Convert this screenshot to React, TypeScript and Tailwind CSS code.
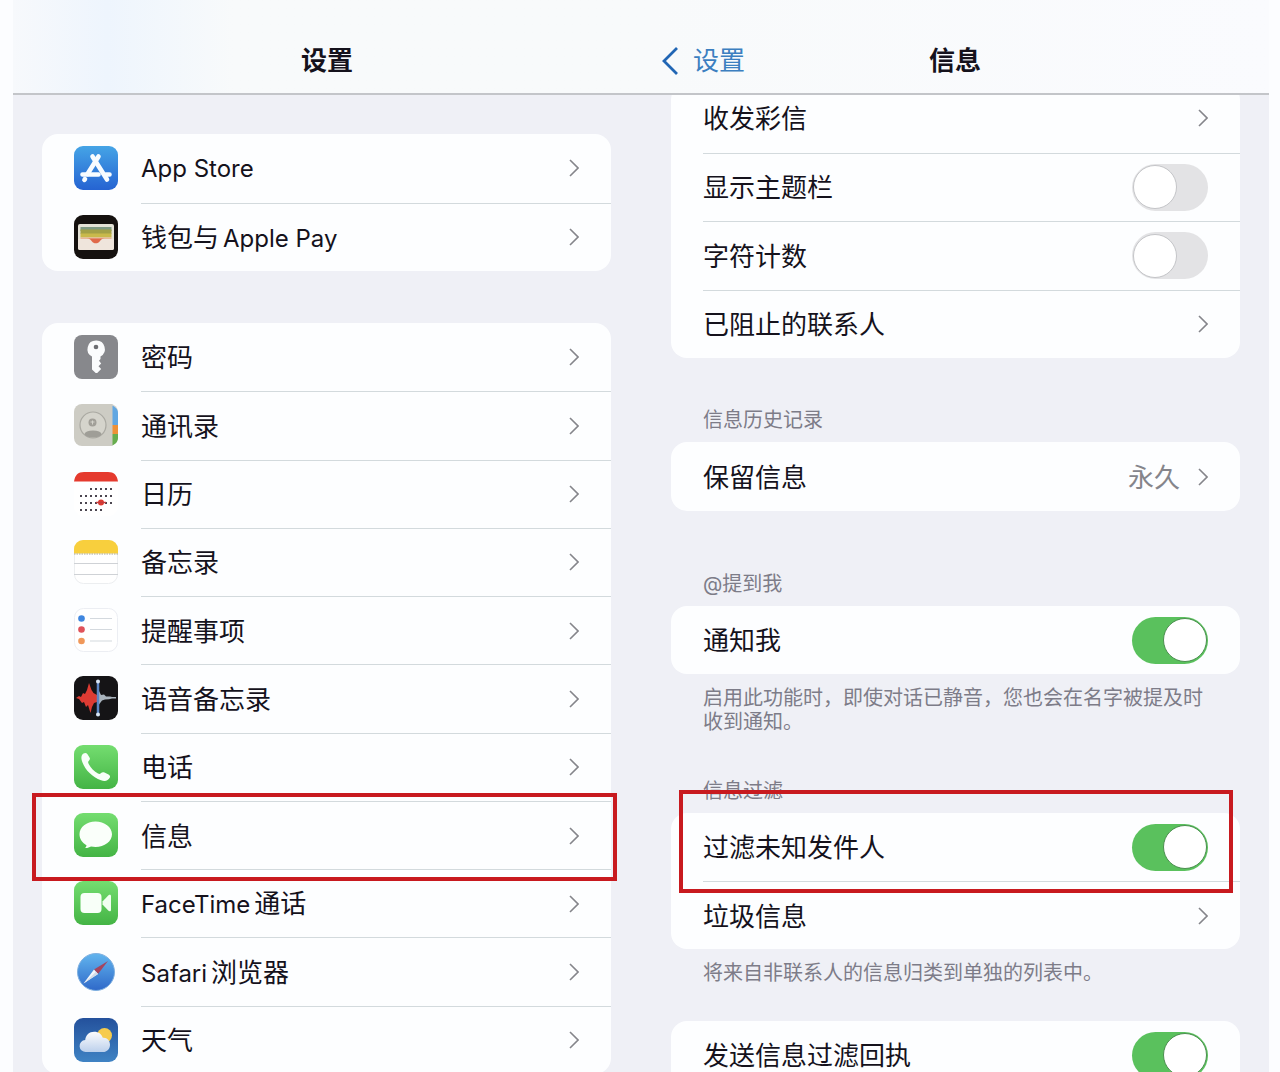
import type { ReactNode } from "react";

const Tile = ({ children, label }: { children: ReactNode; label: string }) => (
  <svg viewBox="0 0 44 44" className="size-11 shrink-0" role="img" aria-label={label}>
    {children}
  </svg>
);

const AppStoreIcon = () => (
  <Tile label="App Store">
    <defs>
      <linearGradient id="store" x1="0" y1="0" x2="0" y2="1">
        <stop offset="0" stopColor="#45a4e6" />
        <stop offset="1" stopColor="#2563d2" />
      </linearGradient>
    </defs>
    <rect width="44" height="44" rx="9" fill="url(#store)" />
    <g stroke="#f8fcff" strokeWidth="4.600" strokeLinecap="round" fill="none">
      <path d="M24.500 10.500L13.500 28" />
      <path d="M18.500 10.500L33 33.500" />
      <path d="M8.500 28.500h16M32 28.500h3.500" />
      <path d="M11 33l-.6 .8" />
    </g>
  </Tile>
);

const WalletIcon = () => (
  <Tile label="钱包">
    <rect width="44" height="44" rx="9" fill="#15110f" />
    <rect x="4" y="9" width="36" height="26" rx="2" fill="#e4e2d6" />
    <rect x="6.500" y="12" width="31" height="4" fill="#7f9a83" />
    <rect x="6.500" y="14.500" width="31" height="4.500" fill="#a2a047" />
    <rect x="6.500" y="18.500" width="31" height="4" fill="#c9b94b" />
    <path d="M6.500 22.500h31v2h-31z" fill="#e8b796" />
    <path d="M4 24h36v9a2 2 0 0 1-2 2H6a2 2 0 0 1-2-2z" fill="#efe5dc" />
    <path d="M13 23.500c3 0 4 1.500 5 3 .8 1.200 2 1.800 3.800 1.800s3-.6 3.800-1.800c1-1.500 2-3 5-3z" fill="#e0694a" />
  </Tile>
);

const KeyIcon = () => (
  <Tile label="密码">
    <rect width="44" height="44" rx="8" fill="#87888c" />
    <path
      d="M22 5.500a8.500 8.500 0 0 0-4 16v13l3.700 3.600h1.500l4-4-2.700-2.800 2.700-2.800-2.200-2.700 1.500-1.800v-2.600A8.500 8.500 0 0 0 22 5.500z"
      fill="#fbfcfd"
    />
    <circle cx="22" cy="12" r="2.300" fill="#6d6e72" />
  </Tile>
);

const ContactsIcon = () => (
  <Tile label="通讯录">
    <path d="M34 1h2a8 8 0 0 1 8 8v3H34z" fill="#d6d5cf" />
    <path d="M36 2c5 1 8 4 8 8v12h-8z" fill="#61a7e2" />
    <path d="M36 22h8v9h-8z" fill="#ee9137" />
    <path d="M36 31h8v4c0 4-3 7-8 8z" fill="#67ad4e" />
    <path d="M8 1h30.500v42H8a8 8 0 0 1-8-8V9a8 8 0 0 1 8-8z" fill="#cdccc4" />
    <circle cx="19" cy="22" r="13" fill="#d5d4cc" stroke="#aaa9a2" strokeWidth="1.200" />
    <circle cx="18.500" cy="19.500" r="4" fill="#a19f98" />
    <path d="M18.500 17.500v4M16.500 19h4" stroke="#d5d4cc" strokeWidth="1" />
    <ellipse cx="19" cy="31" rx="8.500" ry="3.500" fill="#9f9e97" />
  </Tile>
);

const dots: [number, number][] = [
  ...[17, 22, 27, 32, 37].map((x): [number, number] => [x, 17]),
  ...[7, 12, 17, 22, 27, 32, 37].map((x): [number, number] => [x, 24]),
  ...[7, 12, 17, 22, 32, 37].map((x): [number, number] => [x, 31]),
  ...[7, 12, 17, 22, 27].map((x): [number, number] => [x, 38]),
];

const CalendarIcon = () => (
  <Tile label="日历">
    <rect width="44" height="44" rx="9" fill="#fff" />
    <path d="M0 9.500C1 3 4 0 10 0h24c6 0 9 3 10 9.500z" fill="#e53a2e" />
    {dots.map(([x, y]) => (
      <rect key={`${x}-${y}`} x={x - 1} y={y - 1} width="2" height="2" fill="#4b4650" />
    ))}
    <circle cx="27" cy="30.500" r="3" fill="#e0392f" />
    <path d="M22 30.500h10" stroke="#c33c3c" strokeWidth="1.500" />
  </Tile>
);

const NotesIcon = () => (
  <Tile label="备忘录">
    <rect x=".5" y=".5" width="43" height="43" rx="9" fill="#fff" stroke="#eceef0" />
    <path d="M0 13.500V9a9 9 0 0 1 9-9h26a9 9 0 0 1 9 9v4.500z" fill="#f8cf3d" />
    <path d="M0 14h44" stroke="#a9a999" strokeWidth="1.200" strokeDasharray="1.500 1" />
    <path d="M0 23.500h44M0 34.500h44" stroke="#cfd2d6" strokeWidth="1.200" />
  </Tile>
);

const RemindersIcon = () => (
  <Tile label="提醒事项">
    <rect x=".5" y=".5" width="43" height="43" rx="9" fill="#fff" stroke="#eceef3" />
    <circle cx="7.500" cy="10.500" r="3.300" fill="#3f86df" />
    <circle cx="7.500" cy="21.500" r="3.300" fill="#e0525a" />
    <circle cx="7.500" cy="33" r="3.300" fill="#f0985a" />
    <path d="M16 10.500h22M16 21.500h22M16 33h22" stroke="#d4d9de" strokeWidth="1.200" />
  </Tile>
);

const VoiceMemosIcon = () => (
  <Tile label="语音备忘录">
    <rect width="44" height="44" rx="9" fill="#151416" />
    <path d="M2 22l3-2 2 1 2-4 2 1 2-4 2-7 2.500 7 2 3 3.500 2v7l-3 1-2 4-1.500 6-2.500-8-2 2-2-5-2 1-3-4z" fill="#dd3b33" />
    <path d="M25 15l2 4 3-.5 2 2h4l2 .5h4v1.500h-4l-3 .8-4 .2-3 1-3 4z" fill="#aab4bd" />
    <path d="M24 4v36" stroke="#5c86c4" strokeWidth="2.500" />
    <circle cx="24" cy="5.500" r="2" fill="#d8e4f2" />
    <circle cx="24" cy="38.500" r="2" fill="#d8e4f2" />
  </Tile>
);

const GreenTile = ({ id, label, children }: { id: string; label: string; children: ReactNode }) => (
  <Tile label={label}>
    <defs>
      <linearGradient id={id} x1="0" y1="0" x2="0" y2="1">
        <stop offset="0" stopColor="#74dd70" />
        <stop offset="1" stopColor="#44b445" />
      </linearGradient>
    </defs>
    <rect width="44" height="44" rx="9" fill={`url(#${id})`} />
    {children}
  </Tile>
);

const PhoneIcon = () => (
  <GreenTile id="phone" label="电话">
    <path
      d="M9.500 8.500c1.500-1 3-.7 4 .7l2 3.200c.8 1.300.5 2.300-.8 3.500-.8.800-.7 1.700 0 3 1.900 3.800 5.600 7.600 9.300 9.700 1.200.7 2 .6 2.800-.3 1.100-1.200 2.200-1.500 3.700-.8l4 1.900c1.500.8 1.900 1.900 1.200 3.400-1.500 3-4.700 4-8.700 2.500C18 32 10.500 24.500 7.800 15.500c-.9-3.200-.3-5.500 1.700-7z"
      fill="#f8fff8"
    />
  </GreenTile>
);

const MessagesIcon = () => (
  <GreenTile id="messages" label="信息">
    <path
      d="M21.500 8.500C12.500 8.500 5.500 14 5.500 21.300c0 5 3 8.700 7 11-.1 1.200-.6 2-1.500 2.700 2.200.2 4.300-.5 6-1.500 1.500.3 3 .5 4.500.5 9 0 16.500-5.500 16.500-12.700S30.500 8.500 21.500 8.500z"
      fill="#fafffa"
    />
  </GreenTile>
);

const FaceTimeIcon = () => (
  <GreenTile id="facetime" label="FaceTime">
    <rect x="6.500" y="12" width="21" height="20" rx="4" fill="#f8fff8" />
    <path d="M28.500 20.500l6-6.300c1-.9 2.500-.5 2.500.8v14c0 1.300-1.500 1.700-2.500.8l-6-6.300z" fill="#f0fff0" />
  </GreenTile>
);

const SafariIcon = () => (
  <Tile label="Safari">
    <defs>
      <linearGradient id="safari" x1="0" y1="0" x2="0" y2="1">
        <stop offset="0" stopColor="#62b5ee" />
        <stop offset="1" stopColor="#2f69c9" />
      </linearGradient>
    </defs>
    <circle cx="22" cy="22" r="18.500" fill="url(#safari)" stroke="#7fb0e0" />
    <path d="M34 11L20 19.500l4 4.500z" fill="#a5455f" />
    <path d="M9.500 33.500L20 19.500l4 4.500z" fill="#f4f8fc" />
    <path d="M9.500 33.500L22 21.800l2 2.200z" fill="#d3dce8" />
  </Tile>
);

const WeatherIcon = () => (
  <Tile label="天气">
    <defs>
      <linearGradient id="sky" x1="0" y1="0" x2="0" y2="1">
        <stop offset="0" stopColor="#24519c" />
        <stop offset="1" stopColor="#3f83c4" />
      </linearGradient>
      <linearGradient id="cloud" x1="0" y1="0" x2="0" y2="1">
        <stop offset="0" stopColor="#fdfdfd" />
        <stop offset="1" stopColor="#bcd0ec" />
      </linearGradient>
    </defs>
    <rect width="44" height="44" rx="9" fill="url(#sky)" />
    <circle cx="30.500" cy="17.500" r="7.500" fill="#f6cb4c" />
    <path d="M12 34a6 6 0 0 1-.8-12c.5-5 4-8.300 9-8.300 4.300 0 7.300 2.300 8.600 6 4-.6 7.200 2.700 7.200 7 0 4.200-3 7.300-7 7.300z" fill="url(#cloud)" />
  </Tile>
);

const Chevron = () => (
  <svg viewBox="0 0 10 18" className="h-[18px] w-2.5 shrink-0" fill="none" stroke="#85858b" strokeWidth="1.600" aria-hidden="true">
    <path d="M1 1l8 8-8 8" />
  </svg>
);

const Highlight = ({ className }: { className: string }) => (
  <span className={`pointer-events-none absolute z-10 border-4 border-[#c81a1f] ${className}`} aria-hidden="true" />
);

const line = "border-t border-[#d3dadd]";

type AppItem = { name: ReactNode; key: string; icon: ReactNode; highlighted?: boolean };

const Latin = ({ children }: { children: ReactNode }) => <span className="text-[24px]">{children}</span>;

const storeItems: AppItem[] = [
  { key: "store", name: <Latin>App Store</Latin>, icon: <AppStoreIcon /> },
  { key: "wallet", name: <>钱包与<Latin>Apple Pay</Latin></>, icon: <WalletIcon /> },
];

const appItems: AppItem[] = [
  { key: "passwords", name: "密码", icon: <KeyIcon /> },
  { key: "contacts", name: "通讯录", icon: <ContactsIcon /> },
  { key: "calendar", name: "日历", icon: <CalendarIcon /> },
  { key: "notes", name: "备忘录", icon: <NotesIcon /> },
  { key: "reminders", name: "提醒事项", icon: <RemindersIcon /> },
  { key: "memos", name: "语音备忘录", icon: <VoiceMemosIcon /> },
  { key: "phone", name: "电话", icon: <PhoneIcon /> },
  { key: "messages", name: "信息", icon: <MessagesIcon />, highlighted: true },
  { key: "facetime", name: <><Latin>FaceTime</Latin>通话</>, icon: <FaceTimeIcon /> },
  { key: "safari", name: <><Latin>Safari</Latin>浏览器</>, icon: <SafariIcon /> },
  { key: "weather", name: "天气", icon: <WeatherIcon /> },
];

const AppList = ({ items, className }: { items: AppItem[]; className: string }) => (
  <ul className={`grid auto-rows-fr rounded-2xl bg-[#fdfeff] ${className}`}>
    {items.map((item, i) => (
      <li key={item.key} className="relative">
        <button type="button" className="flex h-full w-full items-center gap-[23px] pl-8 text-left">
          {item.icon}
          <span className={`flex h-full min-w-0 flex-1 items-center justify-between pr-8 ${i > 0 ? line : ""}`}>
            <span className="flex items-baseline gap-1 pt-0.5">{item.name}</span>
            <Chevron />
          </span>
        </button>
        {item.highlighted && <Highlight className="-top-2 -right-1.5 -bottom-3 -left-2.5" />}
      </li>
    ))}
  </ul>
);

const Card = ({ children, className = "" }: { children: ReactNode; className?: string }) => (
  <ul className={`grid auto-rows-fr rounded-2xl bg-[#fdfeff] ${className}`}>{children}</ul>
);

const Row = ({ children, first, mark }: { children: ReactNode; first?: boolean; mark?: boolean }) => (
  <li className="relative min-h-[68px] pl-8">
    <div className={`h-full ${first ? "" : line}`}>{children}</div>
    {mark && <Highlight className="-top-[23px] right-[7px] -bottom-3 left-2" />}
  </li>
);

const LinkRow = ({ label, value, first }: { label: string; value?: string; first?: boolean }) => (
  <Row first={first}>
    <button type="button" className="flex h-full w-full items-center pr-8 text-left">
      <span className="flex-1 pt-0.5">{label}</span>
      {value && <span className="mr-[18px] pt-0.5 text-[#85858b]">{value}</span>}
      <Chevron />
    </button>
  </Row>
);

const ToggleRow = ({ label, on, first, mark }: { label: string; on?: boolean; first?: boolean; mark?: boolean }) => (
  <Row first={first} mark={mark}>
    <label className="flex h-full items-center justify-between pr-8">
      <span className="pt-0.5">{label}</span>
      <input
        type="checkbox"
        role="switch"
        defaultChecked={on}
        className="flex h-[47px] w-[76px] shrink-0 appearance-none items-center rounded-full bg-[#e3e3e5] p-px before:size-[44px] before:rounded-full before:border before:border-[#c4c5c8] before:bg-white checked:justify-end checked:bg-[#5ac15d] checked:before:border-[#4b8f4f]"
      />
    </label>
  </Row>
);

const small = "px-8 text-[20px] leading-6 text-[#7d7c88]";

export default function App() {
  return (
    <div className="flex h-screen flex-col overflow-hidden bg-[#fcfdff] pr-[11px] pl-[13px] font-['Inter','Noto_Sans_CJK_SC',sans-serif] text-[26px] leading-8 text-[#15121c]">
      <header className="grid h-[95px] shrink-0 grid-cols-2 border-b-2 border-[#c3c5c9] bg-linear-to-r from-[#f7f9fc] via-[#f8fafb] to-[#fafbfe]">
        <div className="flex items-end justify-center bg-linear-to-r from-[#f7f9fc] via-[#eef5fd] via-15% to-[#f8fafb] to-35% pb-4">
          <h1 className="font-bold">设置</h1>
        </div>
        <div className="grid grid-cols-[1fr_auto_1fr] items-end pb-4">
          <a href="#settings" className="flex items-center gap-[15px] pl-[21px] text-[#3c7fc0]">
            <svg viewBox="0 0 16 28" className="h-7 w-4" fill="none" stroke="#2166b4" strokeWidth="2.800" aria-hidden="true">
              <path d="M15 1L2 14l13 13" />
            </svg>
            设置
          </a>
          <h2 className="font-bold">信息</h2>
        </div>
      </header>

      <main className="grid min-h-0 flex-1 grid-cols-2 bg-[#eff0f6]">
        <section aria-label="设置" className="overflow-y-auto pt-[39px] pr-[30px] pl-[29px] [scrollbar-width:none]">
          <AppList items={storeItems} className="min-h-[137px]" />
          <AppList items={appItems} className="mt-[52px] min-h-[751px]" />
        </section>

        <section aria-label="信息" className="overflow-y-auto pr-[29px] pl-[30px] [scrollbar-width:none]">
          <Card className="-mt-[11px] min-h-[274px]">
            <LinkRow label="收发彩信" first />
            <ToggleRow label="显示主题栏" />
            <ToggleRow label="字符计数" />
            <LinkRow label="已阻止的联系人" />
          </Card>

          <h3 className={`mt-[50px] mb-2.5 ${small}`}>信息历史记录</h3>
          <Card className="min-h-[69px]">
            <LinkRow label="保留信息" value="永久" first />
          </Card>

          <h3 className={`mt-[61px] mb-2.5 ${small}`}>@提到我</h3>
          <Card>
            <ToggleRow label="通知我" on first />
          </Card>
          <p className={`mt-3 ${small}`}>启用此功能时，即使对话已静音，您也会在名字被提及时收到通知。</p>

          <h3 className={`mt-[45px] mb-2.5 ${small}`}>信息过滤</h3>
          <Card>
            <ToggleRow label="过滤未知发件人" on first mark />
            <LinkRow label="垃圾信息" />
          </Card>
          <p className={`mt-3 ${small}`}>将来自非联系人的信息归类到单独的列表中。</p>

          <Card className="mt-9">
            <ToggleRow label="发送信息过滤回执" on first />
          </Card>
        </section>
      </main>
    </div>
  );
}
